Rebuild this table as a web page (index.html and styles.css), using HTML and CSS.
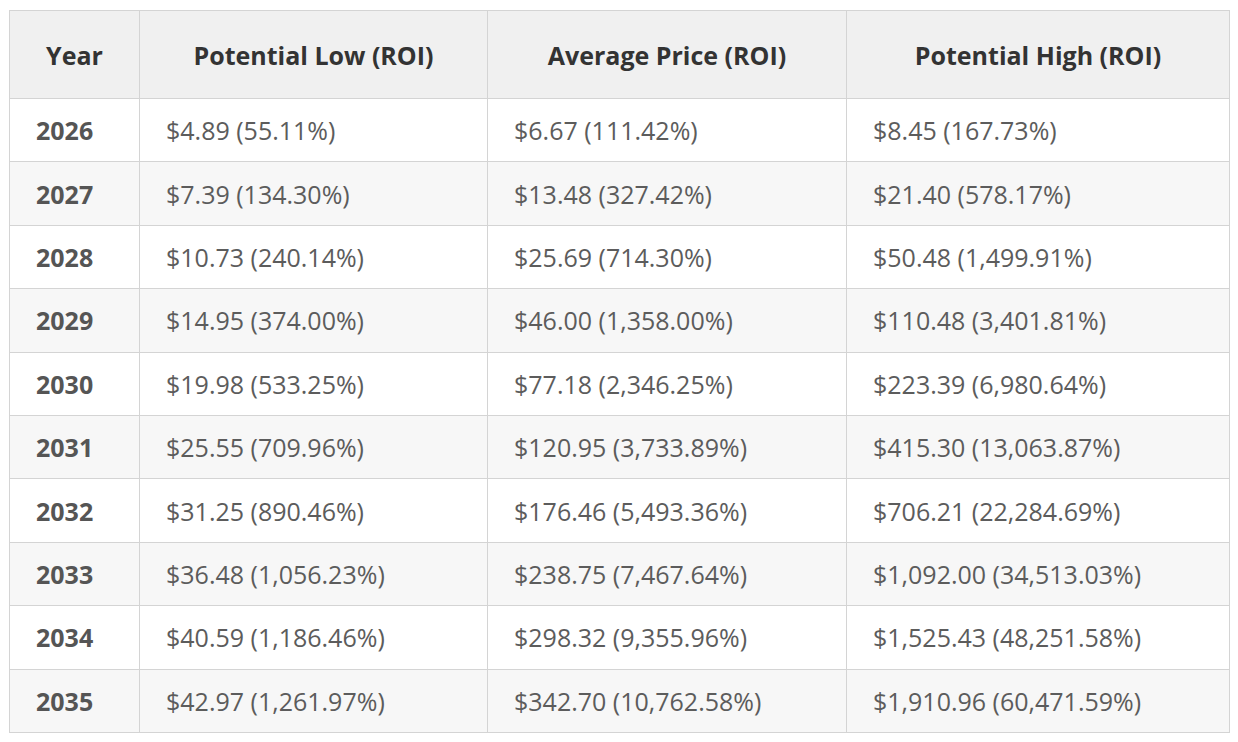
FILE: index.html
```html
<!DOCTYPE html>
<html lang="en">
<head>
<meta charset="utf-8">
<title>Price Prediction</title>
<link rel="stylesheet" href="styles.css">
</head>
<body>
<div class="wrap">
<table class="prices">
<colgroup>
<col class="c-year">
<col class="c-low">
<col class="c-avg">
<col class="c-high">
</colgroup>
<thead>
<tr><th>Year</th><th>Potential Low (ROI)</th><th>Average Price (ROI)</th><th>Potential High (ROI)</th></tr>
</thead>
<tbody>
<tr><td class="yr">2026</td><td>$4.89 (55.11%)</td><td>$6.67 (111.42%)</td><td>$8.45 (167.73%)</td></tr>
<tr><td class="yr">2027</td><td>$7.39 (134.30%)</td><td>$13.48 (327.42%)</td><td>$21.40 (578.17%)</td></tr>
<tr><td class="yr">2028</td><td>$10.73 (240.14%)</td><td>$25.69 (714.30%)</td><td>$50.48 (1,499.91%)</td></tr>
<tr><td class="yr">2029</td><td>$14.95 (374.00%)</td><td>$46.00 (1,358.00%)</td><td>$110.48 (3,401.81%)</td></tr>
<tr><td class="yr">2030</td><td>$19.98 (533.25%)</td><td>$77.18 (2,346.25%)</td><td>$223.39 (6,980.64%)</td></tr>
<tr><td class="yr">2031</td><td>$25.55 (709.96%)</td><td>$120.95 (3,733.89%)</td><td>$415.30 (13,063.87%)</td></tr>
<tr><td class="yr">2032</td><td>$31.25 (890.46%)</td><td>$176.46 (5,493.36%)</td><td>$706.21 (22,284.69%)</td></tr>
<tr><td class="yr">2033</td><td>$36.48 (1,056.23%)</td><td>$238.75 (7,467.64%)</td><td>$1,092.00 (34,513.03%)</td></tr>
<tr><td class="yr">2034</td><td>$40.59 (1,186.46%)</td><td>$298.32 (9,355.96%)</td><td>$1,525.43 (48,251.58%)</td></tr>
<tr><td class="yr">2035</td><td>$42.97 (1,261.97%)</td><td>$342.70 (10,762.58%)</td><td>$1,910.96 (60,471.59%)</td></tr>
</tbody>
</table>
</div>
</body>
</html>
```
FILE: styles.css
```css
html, body {
  margin: 0;
  padding: 0;
  background: #ffffff;
}
.wrap {
  padding: 10px 9px 0 9px;
}
.prices {
  width: 1220px;
  border-collapse: collapse;
  table-layout: fixed;
  font-family: "Open Sans", "Noto Sans", sans-serif;
  font-size: 25px;
}
.c-year { width: 130px; }
.c-low { width: 348px; }
.c-avg { width: 359px; }
.c-high { width: 383px; }
.prices th,
.prices td {
  border: 1px solid #d4d4d4;
  padding: 0 0 0 26px;
  vertical-align: middle;
  white-space: nowrap;
}
.prices th {
  height: 87px;
  padding: 0;
  background: #f0f0f0;
  color: #333333;
  font-weight: 700;
  text-align: center;
}
.prices tbody tr {
  height: 63.4px;
}
.prices tbody tr:nth-child(even) td {
  background: #f7f7f7;
}
.prices td {
  color: #5c5c5c;
  font-weight: 400;
}
.prices td.yr {
  font-weight: 700;
  color: #555555;
}
```
